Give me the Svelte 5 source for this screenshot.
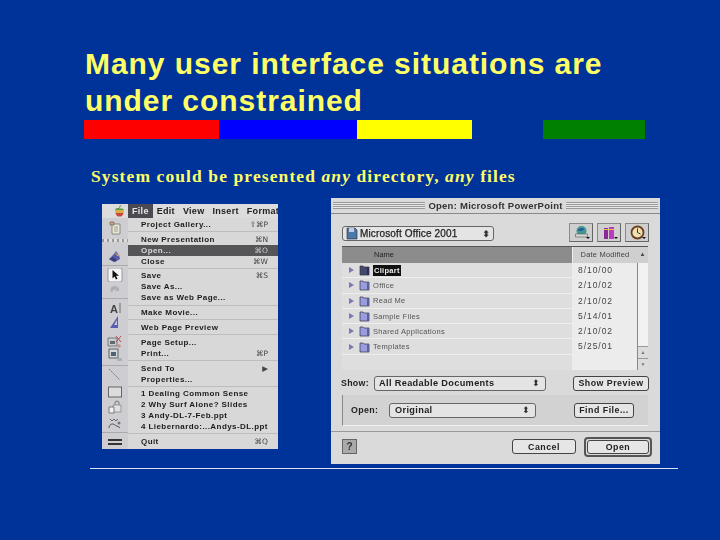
<script>
  const groups = [
    [{ t: 'Project Gallery...', k: '⇧⌘P' }],
    [{ t: 'New Presentation', k: '⌘N' }, { t: 'Open...', k: '⌘O', on: true }, { t: 'Close', k: '⌘W' }],
    [{ t: 'Save', k: '⌘S' }, { t: 'Save As...' }, { t: 'Save as Web Page...' }],
    [{ t: 'Make Movie...' }],
    [{ t: 'Web Page Preview' }],
    [{ t: 'Page Setup...' }, { t: 'Print...', k: '⌘P' }],
    [{ t: 'Send To', k: '▶' }, { t: 'Properties...' }],
    [{ t: '1 Dealing Common Sense' }, { t: '2 Why Surf Alone? Slides' }, { t: '3 Andy-DL-7-Feb.ppt' }, { t: '4 Liebernardo:...Andys-DL.ppt' }],
    [{ t: 'Quit', k: '⌘Q' }]
  ]
  const menus = ['File', 'Edit', 'View', 'Insert', 'Format']
  // vertical centre of each toolbar icon, measured from the top of the toolbar
  const toolY = [10, 39, 57, 72, 90, 104, 124, 137, 157, 174, 189, 205, 224]
  const ruledTools = [2, 4, 8, 12]
  const files = [
    { n: 'Clipart', d: '8/10/00', sel: true },
    { n: 'Office', d: '2/10/02' },
    { n: 'Read Me', d: '2/10/02' },
    { n: 'Sample Files', d: '5/14/01' },
    { n: 'Shared Applications', d: '2/10/02' },
    { n: 'Templates', d: '5/25/01' }
  ]
</script>

<main class="slide">
  <h1>Many user interface situations are<br />under constrained</h1>

  <div class="bars">
    <span class="red"></span>
    <span class="blue"></span>
    <span class="yellow"></span>
    <span class="green"></span>
  </div>

  <p class="sub">System could be presented <em>any</em> directory, <em>any</em> files</p>

  <div class="shots">
    <div class="office">
      <div class="menubar">
        <svg class="apple" width="11" height="12" viewBox="0 0 10 11">
          <path d="M1 5c0-2 2-2.500 4-2s4 0 4 2H1z" fill="#5a9a40" />
          <path d="M1 5h8v2H1z" fill="#e8b030" />
          <path d="M1.300 7h7.400c-.5 2-1.500 3.500-2.700 3.500h-2C2.800 10.500 1.800 9 1.300 7z" fill="#c84838" />
          <path d="M5 2.500C5 1.500 5.700.7 6.500.5" stroke="#5a9a40" fill="none" />
        </svg>
        {#each menus as m}
          <span class:active={m === 'File'}>{m}</span>
        {/each}
      </div>
      <div class="office-body">
        <div class="toolbar">
          {#each toolY as y, i}
            <div class="tool" class:ruled={ruledTools.includes(i)} class:strip={i === 1} style="margin-top:{i === 0 ? y - 7 : y - toolY[i - 1] - 14}px">
              <svg width="18" height="14" viewBox="0 0 18 14">
                {#if i === 0}
                  <path d="M6 3h8v10H6z" fill="#e8e4d8" stroke="#776" stroke-width=".8" />
                  <path d="M4 1h4v3H4z" fill="#c8a878" stroke="#654" stroke-width=".6" />
                  <path d="M8 6h4M8 8h4M8 10h4" stroke="#887" stroke-width=".7" />
                {:else if i === 1}
                  <path d="M3 9l5-5 2-3 3 4 1 4-5 3z" fill="#5a5ca8" />
                  <path d="M9 2l2 4h3z" fill="#c8a060" />
                  <path d="M3 9l5 3 3-2-4-3z" fill="#3c3e80" />
                {:else if i === 2}
                  <rect x="2" y="0" width="14" height="14" rx="2" fill="#f4f4f4" stroke="#888" stroke-width=".8" />
                  <path d="M6.500 2v8.500l2-2 1.500 3 1.500-.7L10 7.800h3z" fill="#111" />
                {:else if i === 3}
                  <path d="M5 9a4 4 0 0 1 7-4l1-1v4H9l1.300-1.200A2.500 2.500 0 0 0 6.500 9z" fill="#b0b0b4" />
                {:else if i === 4}
                  <text x="4" y="12" class="tool-a">A</text>
                  <path d="M14 2v10" stroke="#555" stroke-width=".8" />
                {:else if i === 5}
                  <path d="M12 1v12H4z" fill="#5a5cb0" />
                  <path d="M11 5v5H8z" fill="#c8c8e0" />
                {:else if i === 6}
                  <path d="M2 3h9v8H2z" fill="#c8ccd0" stroke="#666" stroke-width=".8" />
                  <path d="M4 6h5v3H4z" fill="#606870" />
                  <path d="M10 1l5 6M15 1l-5 6" stroke="#b05050" />
                  <circle cx="13" cy="11" r="1.800" fill="#c89090" />
                {:else if i === 7}
                  <path d="M3 1h9v9H3z" fill="#d4d8dc" stroke="#555" stroke-width=".9" />
                  <path d="M5 4h5v4H5z" fill="#506070" />
                  <path d="M11 10h5v3h-5z" fill="#a8b0b8" />
                {:else if i === 8}
                  <path d="M3 1l11 11" stroke="#777" stroke-dasharray="2 1" />
                {:else if i === 9}
                  <rect x="2.500" y="2" width="13" height="10" fill="#dcdcdc" stroke="#666" />
                {:else if i === 10}
                  <path d="M9 5V3a2 2 0 0 1 4 0v2" stroke="#777" fill="none" />
                  <path d="M7 5h8v7H7z" fill="#e0e0e0" stroke="#888" stroke-width=".8" />
                  <path d="M3 7h5v6H3z" fill="#f0f0f0" stroke="#666" stroke-width=".8" />
                {:else if i === 11}
                  <path d="M4 3l2 2 2-2 2 2 2-2" stroke="#666" fill="none" />
                  <path d="M3 12c0-4 4-5 6-3s4 1 5 3" stroke="#555" fill="none" />
                  <circle cx="13" cy="7" r="1.500" fill="#777" />
                {:else}
                  <path d="M2 5h14M2 9h14" stroke="#000" stroke-width="1.400" />
                {/if}
              </svg>
            </div>
          {/each}
        </div>
        <div class="menu">
          {#each groups as g, i}
            <div class="group" class:ruled={i > 0}>
              {#each g as item}
                <div class="item" class:on={item.on}>
                  <span>{item.t}</span>
                  {#if item.k}<span class="key">{item.k}</span>{/if}
                </div>
              {/each}
            </div>
          {/each}
        </div>
      </div>
    </div>

    <div class="dialog">
      <div class="title">
        <span class="stripes"></span>
        <b>Open: Microsoft PowerPoint</b>
        <span class="stripes"></span>
      </div>
      <div class="body">
        <div class="top-row">
          <div class="popup location">
            <svg width="12" height="13" viewBox="0 0 12 13">
              <path d="M1 1h8l2 2v9H1z" fill="#4a78a8" stroke="#223" stroke-width=".6" />
              <path d="M3 1h5v4H3z" fill="#c8ccd8" />
            </svg>
            <span>Microsoft Office 2001</span>
            <i class="updown">⬍</i>
          </div>
          <div class="icon-btns">
            <div class="icon-btn">
              <svg width="17" height="15" viewBox="0 0 16 15">
                <circle cx="8" cy="6" r="5" fill="#3f9a90" />
                <path d="M4 5c2-2 5-3 7-1-1 2-5 3-7 1z" fill="#2a5aa0" />
                <path d="M2 9h12v3H2z" fill="#d8d8d8" stroke="#555" stroke-width=".6" />
              </svg>
            </div>
            <div class="icon-btn">
              <svg width="14" height="15" viewBox="0 0 14 15">
                <path d="M2 3h4v11H2z" fill="#8a2a9a" />
                <path d="M7 2h5v12H7z" fill="#c038c0" />
                <path d="M2 4h10v1H2z" fill="#e8c040" />
              </svg>
            </div>
            <div class="icon-btn">
              <svg width="15" height="15" viewBox="0 0 15 15">
                <circle cx="7.500" cy="7.500" r="6" fill="#f0e0b0" stroke="#6a4020" stroke-width="1.800" />
                <path d="M7.500 3.500v4l3 1.500" stroke="#333" fill="none" />
              </svg>
            </div>
          </div>
        </div>

        <div class="list">
          <div class="list-head">
            <div class="h-name">Name</div>
            <div class="h-date">Date Modified</div>
            <div class="h-sort">▲</div>
          </div>
          <div class="list-main">
            <div class="rows">
              {#each files as f}
                <div class="row">
                  <div class="r-name">
                    <i class="tri"></i>
                    <svg width="11" height="12" viewBox="0 0 11 12">
                      <path d="M1 2h3l1 1h5v8H1z" fill={f.sel ? '#44486e' : '#9a9ce0'} stroke="#334" stroke-width=".7" />
                      <path d="M8 3h2v8H8z" fill={f.sel ? '#2c2e50' : '#5a6098'} />
                    </svg>
                    <span class:sel={f.sel}>{f.n}</span>
                  </div>
                  <div class="r-date">{f.d}</div>
                </div>
              {/each}
              <div class="row-rest"><div></div><div class="date-rest"></div></div>
            </div>
            <div class="scroll">
              <span class="arrow">▲</span>
              <span class="arrow">▼</span>
            </div>
          </div>
        </div>

        <div class="show-row">
          <b>Show:</b>
          <div class="popup show"><span>All Readable Documents</span><i class="updown">⬍</i></div>
          <div class="btn preview">Show Preview</div>
        </div>

        <div class="open-box">
          <b>Open:</b>
          <div class="popup original"><span>Original</span><i class="updown">⬍</i></div>
          <div class="btn find">Find File...</div>
        </div>
      </div>

      <div class="foot">
        <div class="help">?</div>
        <div class="btn cancel">Cancel</div>
        <div class="default"><div class="btn">Open</div></div>
      </div>
    </div>
  </div>

  <hr />
</main>

<style>
  :global(body) { margin: 0; background: #003399; }
  .slide {
    width: 720px; height: 540px; box-sizing: border-box; overflow: hidden;
    background: #003399; padding-top: 45px;
  }
  h1 {
    margin: 0 0 0 85px; font: 700 30px/37px "Liberation Sans", Arial, sans-serif;
    color: #ffff66; letter-spacing: .95px;
  }
  .bars { display: flex; margin: 0 0 0 84px; height: 19px; padding-top: 1px; }
  .bars span { display: block; height: 19px; }
  .red { width: 135px; background: #ff0000; }
  .blue { width: 138px; background: #0000ff; }
  .yellow { width: 115px; background: #ffff00; }
  .green { width: 102px; margin-left: 71px; background: #008000; }
  .sub {
    margin: 28px 0 0 91px; font: 700 17.500px/19px "Liberation Serif", "Times New Roman", serif;
    color: #ffff66; letter-spacing: 1.1px;
  }

  .shots { display: flex; align-items: flex-start; gap: 53px; margin: 12px 0 0 102px; }

  .office {
    width: 176px; height: 245px; margin-top: 6px; display: flex; flex-direction: column; flex: none;
    background: #d6d6d6; font-family: "Liberation Sans", Arial, sans-serif; filter: blur(.4px);
  }
  .menubar {
    height: 14px; flex: none; padding-left: 12px; display: flex; align-items: center; overflow: hidden;
    background: #dcdcdc; font-size: 9px; font-weight: 700; color: #222;
  }
  .menubar .apple { margin-right: 3px; flex: none; }
  .menubar span { padding: 0 4px; line-height: 14px; white-space: nowrap; letter-spacing: .3px; }
  .menubar span.active { background: #4a4a50; color: #e4e4e4; }
  .office-body { flex: 1; display: flex; min-height: 0; }
  .toolbar { width: 26px; flex: none; display: flex; flex-direction: column; align-items: center; background: #cdcdd2; }
  .tool { height: 14px; position: relative; }
  .tool svg { display: block; }
  .tool.ruled::before { content: ""; position: absolute; left: -4px; right: -4px; top: -3px; height: 1px; background: #aaa; }
  .tool.strip::before { content: ""; position: absolute; left: -4px; right: -4px; top: -11px; height: 3px; background: repeating-linear-gradient(90deg, #999 0 2px, #ddd 2px 5px); }
  .tool-a { font: 700 11px "Liberation Sans", sans-serif; fill: #444; }
  .menu { flex: 1; background: #d8d8d8; font-size: 8px; font-weight: 700; color: #1c1c1c; }
  .group { padding: 1px 0; }
  .group.ruled { border-top: 1px solid #bdbdbd; padding-top: 1.600px; padding-bottom: 1.200px; }
  .item { height: 11px; display: flex; justify-content: space-between; align-items: center; padding: 0 10px 0 13px; letter-spacing: .42px; white-space: nowrap; }
  .item.on { background: #555558; color: #d8d8d8; }
  .key { font-weight: 400; font-family: "DejaVu Sans", sans-serif; font-size: 7.500px; color: #444; letter-spacing: 0; }
  .on .key { color: #ccc; }

  .dialog {
    width: 329px; height: 266px; flex: none; display: flex; flex-direction: column;
    background: #dadada; font-family: "Liberation Sans", Arial, sans-serif; color: #222; filter: blur(.4px);
  }
  .title { height: 15px; flex: none; display: flex; align-items: center; gap: 3px; padding: 0 2px; font-size: 9.500px; white-space: nowrap; }
  .title b { letter-spacing: .25px; color: #333; }
  .stripes { flex: 1; height: 7px; background: repeating-linear-gradient(#9a9a9a 0 1px, #e8e8e8 1px 2px); }
  .body { flex: 1; padding: 12px 11px 0; display: flex; flex-direction: column; border-top: 1px solid #888; }
  .top-row { display: flex; justify-content: space-between; align-items: flex-start; height: 20px; }
  .popup {
    display: flex; align-items: center; box-sizing: border-box; background: #e4e4e4;
    border: 1px solid #666; border-radius: 3px; font-size: 9.200px; font-weight: 700; padding: 0 5px; letter-spacing: .35px;
  }
  .popup span { flex: 1; white-space: nowrap; }
  .updown { font: 400 9px "DejaVu Sans", sans-serif; color: #333; }
  .location { width: 152px; height: 15px; padding: 0 3px; gap: 2px; font-size: 10px; font-weight: 400; color: #222; -webkit-text-stroke: .25px #222; letter-spacing: .15px; }
  .icon-btns { display: flex; gap: 4px; margin-top: -3px; }
  .icon-btn {
    width: 24px; height: 19px; display: flex; align-items: center; justify-content: center; position: relative;
    background: #cfcfcf; border: 1px solid #8a8a8a; border-right-color: #666; border-bottom-color: #666; box-sizing: border-box;
  }
  .icon-btn::after {
    content: ""; position: absolute; right: 2px; bottom: 2px; width: 0; height: 0;
    border-left: 2px solid transparent; border-right: 2px solid transparent; border-top: 2px solid #111;
  }

  .list { width: 306px; height: 124px; flex: none; background: #e8e8e8; border-top: 1px solid #555; box-sizing: border-box; display: flex; flex-direction: column; }
  .list-head { height: 16px; flex: none; display: flex; font-size: 7.500px; color: #444; }
  .h-name { width: 230px; background: #8c8c8c; padding-left: 32px; line-height: 15px; box-sizing: border-box; color: #222; }
  .h-date { flex: 1; background: #cfcfcf; text-align: center; line-height: 15px; letter-spacing: .2px; border-left: 1px solid #eee; }
  .h-sort { width: 11px; background: #cfcfcf; font-size: 6px; line-height: 15px; text-align: center; }
  .list-main { flex: 1; display: flex; min-height: 0; }
  .rows { flex: 1; display: flex; flex-direction: column; background: #dedede; }
  .row { height: 15.300px; display: flex; flex: none; border-bottom: 1px solid #eee; box-sizing: border-box; font-size: 7.500px; color: #555; letter-spacing: .3px; }
  .r-name { width: 230px; display: flex; align-items: center; gap: 3px; padding-left: 7px; box-sizing: border-box; }
  .r-date { flex: 1; background: #ececec; padding-left: 6px; line-height: 15px; font-size: 8.500px; letter-spacing: .95px; color: #444; }
  .tri { width: 0; height: 0; border-left: 5px solid #7a7ab0; border-top: 3.500px solid transparent; border-bottom: 3.500px solid transparent; margin-right: 2px; }
  .sel { background: #111; color: #eee; padding: 1px 1px; font-weight: 700; }
  .row-rest { flex: 1; display: flex; }
  .row-rest div:first-child { width: 230px; }
  .date-rest { flex: 1; background: #ececec; }
  .scroll { width: 11px; flex: none; display: flex; flex-direction: column; justify-content: flex-end; background: #f2f2f2; border-left: 1px solid #888; box-sizing: border-box; }
  .arrow { height: 11px; font-size: 5px; line-height: 11px; text-align: center; color: #777; background: #dcdcdc; border-top: 1px solid #999; }

  .btn {
    display: flex; align-items: center; justify-content: center; box-sizing: border-box; background: #e6e6e6;
    border: 1px solid #444; border-radius: 3px; font-size: 8.800px; font-weight: 700; letter-spacing: .5px; white-space: nowrap; color: #222;
  }
  .show-row { display: flex; align-items: center; height: 16px; margin-top: 5px; font-size: 8.800px; margin-left: -1px; }
  .show-row b { width: 33px; flex: none; letter-spacing: .3px; }
  .show { width: 172px; height: 15px; padding-left: 4px; }
  .preview { width: 76px; height: 15px; margin-left: 27px; }
  .open-box {
    width: 306px; height: 31px; margin-top: 4px; box-sizing: border-box; display: flex; align-items: center;
    padding-left: 8px; font-size: 8.800px; background: #d2d2d2; border-left: 1px solid #888; border-bottom: 1px solid #f0f0f0;
  }
  .open-box b { width: 38px; flex: none; letter-spacing: .4px; }
  .original { width: 147px; height: 15px; padding-left: 5px; }
  .find { width: 60px; height: 15px; margin-left: 38px; }

  .foot { height: 33px; box-sizing: border-box; flex: none; display: flex; align-items: center; padding: 0 8px 3px 11px; border-top: 1px solid #999; }
  .help { width: 15px; height: 15px; background: #aaa; border: 1px solid #666; box-sizing: border-box; font: 700 10px/13px "Liberation Sans", sans-serif; text-align: center; color: #333; }
  .cancel { width: 64px; height: 15px; margin-left: 155px; }
  .default { width: 68px; height: 20px; box-sizing: border-box; margin-left: 8px; border: 2px solid #555; border-radius: 4px; padding: 1px; display: flex; }
  .default .btn { flex: 1; border-width: 1px; }

  hr { width: 588px; margin: 4px 0 0 90px; border: 0; border-top: 1px solid #d8e4f0; }
</style>
